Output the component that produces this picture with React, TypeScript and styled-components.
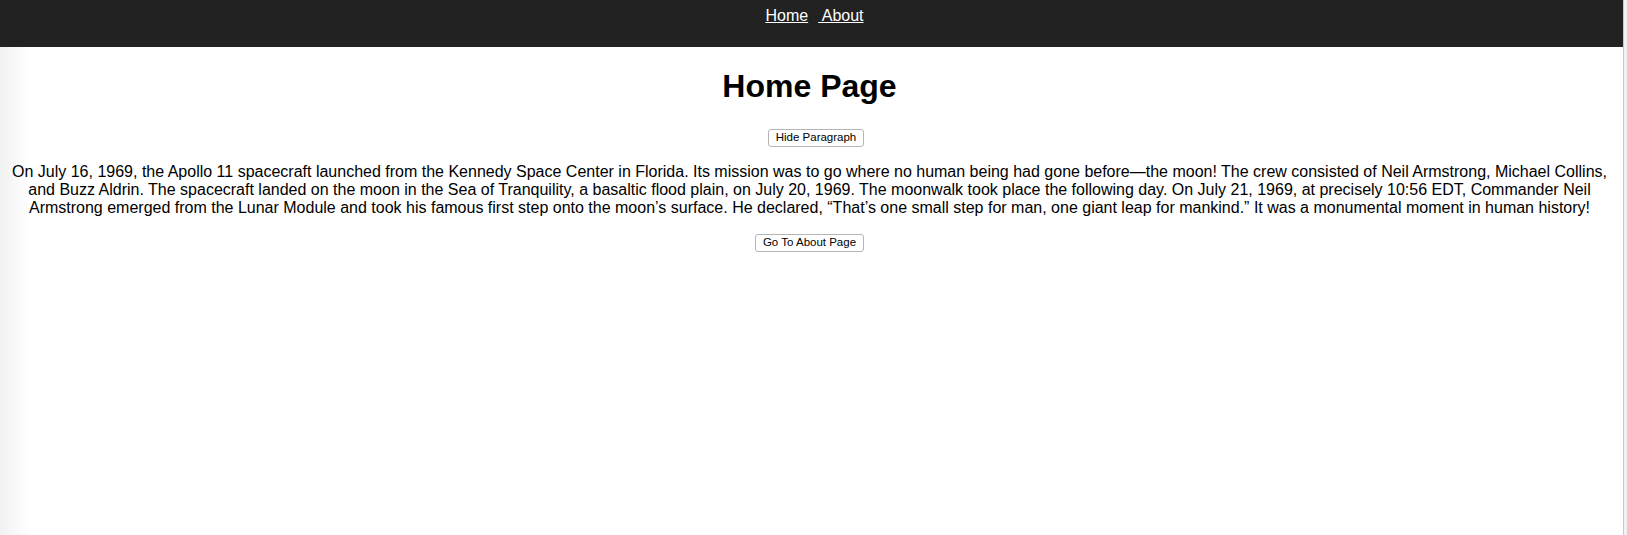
import React, { useState } from "react";
import styled, { createGlobalStyle } from "styled-components";

const GlobalStyle = createGlobalStyle`
  html, body {
    margin: 0;
    padding: 0;
    background: #ffffff;
  }
  body {
    font-family: "Liberation Sans", Arial, Helvetica, sans-serif;
    color: #000;
  }
`;

const Shell = styled.div`
  display: flex;
  min-height: 535px;
`;

const Page = styled.div`
  flex: 1;
  min-width: 0;
  background: linear-gradient(to right, #f1f1f1 0px, #fafafa 18px, #ffffff 32px);
  text-align: center;
`;

const SideStrip = styled.div`
  width: 3px;
  border-left: 1px solid #c9c9c9;
  background: #f1f1f1;
`;

const NavBar = styled.nav`
  height: 47px;
  box-sizing: border-box;
  padding: 7px 0 0 6px;
  background: #222222;
  display: flex;
  justify-content: center;
  align-items: flex-start;
  gap: 10px;
`;

const NavLink = styled.a`
  color: #ffffff;
  font-size: 16px;
  text-decoration: underline;
  cursor: pointer;
  white-space: pre;
`;

const Main = styled.main`
  display: block;
  padding-right: 4px;
`;

const Title = styled.h1`
  font-size: 32px;
  font-weight: bold;
  margin: 21px 0 0;
`;

const ButtonRow = styled.div<{ $top: number; $shift: number }>`
  display: flex;
  justify-content: center;
  padding-top: ${(p) => p.$top}px;
  padding-left: ${(p) => Math.max(0, p.$shift * 2)}px;
  padding-right: ${(p) => Math.max(0, -p.$shift * 2)}px;
`;

const PlainButton = styled.button`
  font-family: "Liberation Sans", Arial, Helvetica, sans-serif;
  font-size: 11.5px;
  line-height: 13px;
  color: #000;
  background: #ffffff;
  border: 1px solid #b5b5b5;
  border-radius: 3px;
  padding: 1px 6.5px 2px;
  height: 18px;
  box-sizing: border-box;
  cursor: pointer;
`;

const Story = styled.p`
  font-size: 16px;
  line-height: 18px;
  margin: 16px 8px 16px 8px;
`;

export default function App() {
  const [shown, setShown] = useState(true);
  return (
    <>
      <GlobalStyle />
      <Shell>
        <Page>
          <NavBar>
            <NavLink>Home</NavLink>
            <NavLink>{" About"}</NavLink>
          </NavBar>
          <Main>
            <Title>Home Page</Title>
            <ButtonRow $top={24} $shift={6.5}>
              <PlainButton onClick={() => setShown(!shown)}>
                {shown ? "Hide Paragraph" : "Show Paragraph"}
              </PlainButton>
            </ButtonRow>
            {shown && (
              <Story>
                On July 16, 1969, the Apollo 11 spacecraft launched from the Kennedy Space Center in Florida. Its mission was to go where no human being had gone before—the moon! The crew consisted of Neil Armstrong, Michael Collins, and Buzz Aldrin. The spacecraft landed on the moon in the Sea of Tranquility, a basaltic flood plain, on July 20, 1969. The moonwalk took place the following day. On July 21, 1969, at precisely 10:56 EDT, Commander Neil Armstrong emerged from the Lunar Module and took his famous first step onto the moon’s surface. He declared, “That’s one small step for man, one giant leap for mankind.” It was a monumental moment in human history!
              </Story>
            )}
            <ButtonRow $top={1} $shift={0}>
              <PlainButton>Go To About Page</PlainButton>
            </ButtonRow>
          </Main>
        </Page>
        <SideStrip />
      </Shell>
    </>
  );
}
